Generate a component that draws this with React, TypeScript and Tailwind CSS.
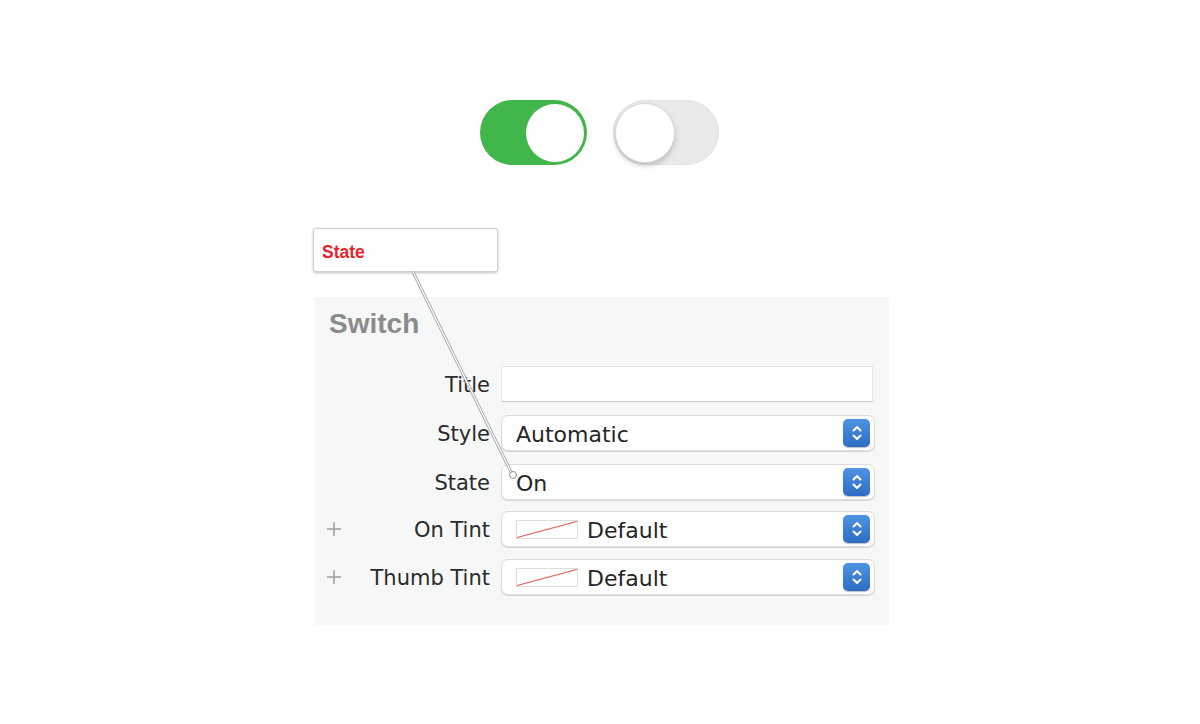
import React from "react";

const labelFont = { fontFamily: '"DejaVu Sans", "Noto Sans", sans-serif' };

function Stepper() {
    return (
        <div className="flex h-[28px] w-[27px] items-center justify-center rounded-[5px] bg-gradient-to-b from-[#4f93e2] to-[#2e6cc4] shadow-[0_1px_1px_rgba(0,0,0,0.25)]">
            <svg width="14" height="18" viewBox="0 0 14 18" fill="none" stroke="white" strokeWidth="2" strokeLinecap="round" strokeLinejoin="round">
                <path d="M3.5 6.5 L7 3 L10.5 6.5" />
                <path d="M3.5 11.5 L7 15 L10.5 11.5" />
            </svg>
        </div>
    );
}

function Swatch() {
    return (
        <div className="mr-[9px] h-[19px] w-[62px] border border-[#dedede] bg-white">
            <svg width="60" height="17" viewBox="0 0 60 17">
                <line x1="0" y1="16.5" x2="60" y2="0.5" stroke="#ee5a5a" strokeWidth="1.2" />
            </svg>
        </div>
    );
}

function Select({ value, swatch }: { value: string; swatch?: boolean }) {
    return (
        <div className="flex h-[36px] w-[374px] items-center rounded-[7px] border border-[#dddddd] bg-white pl-[14px] pr-[4px] shadow-[0_1px_1px_rgba(0,0,0,0.14)]">
            {swatch && <Swatch />}
            <span className="flex-1 pt-[3px] text-[22px] leading-none text-[#262626]" style={labelFont}>
                {value}
            </span>
            <Stepper />
        </div>
    );
}

function Row({ label, plus, top, children }: { label: string; plus?: boolean; top: string; children: React.ReactNode }) {
    return (
        <div className={`flex h-[36px] items-center ${top}`}>
            <span className="flex w-[16px] items-center justify-center">
                {plus && (
                    <svg width="16" height="16" viewBox="0 0 16 16" stroke="#9c9c9c" strokeWidth="1.5">
                        <line x1="8" y1="1" x2="8" y2="15" />
                        <line x1="1" y1="8" x2="15" y2="8" />
                    </svg>
                )}
            </span>
            <span className="flex-1 pr-[11px] pt-[3px] text-right text-[21px] leading-none text-[#2b2b2b]" style={labelFont}>
                {label}
            </span>
            {children}
        </div>
    );
}

export default function App() {
    return (
        <div className="relative h-[724px] w-[1200px] overflow-hidden bg-white pt-[100px]">
            {/* switches */}
            <div className="ml-[480px] flex gap-[26px]">
                <div className="flex h-[65px] w-[107px] items-center justify-end rounded-full bg-[#41b64a] pr-[3px]">
                    <div className="h-[58px] w-[58px] rounded-full bg-white" />
                </div>
                <div className="flex h-[65px] w-[106px] items-center rounded-full border border-[#e2e2e4] bg-[#e9e9ec] pl-[1px]">
                    <div className="h-[60px] w-[60px] rounded-full border border-[#dadada] bg-white shadow-[0_3px_5px_rgba(0,0,0,0.18)]" />
                </div>
            </div>

            {/* callout */}
            <div className="ml-[313px] mt-[63px] flex h-[44px] w-[185px] items-center rounded-[3px] border border-[#d2d2d2] bg-white pl-[8px] pt-[5px] shadow-[0_1px_3px_rgba(0,0,0,0.25)]">
                <span className="text-[17.5px] font-bold text-[#e8232b]" style={{ fontFamily: '"Liberation Sans", Arial, sans-serif' }}>
                    State
                </span>
            </div>

            {/* inspector panel */}
            <div className="ml-[314px] mt-[25px] h-[328px] w-[575px] bg-[#f6f7f7] pl-[12px] pr-[14px] pt-[10px]">
                <div className="h-[34px] pl-[3px] text-[28px] font-bold leading-[34px] text-[#8b8b8b]" style={{ fontFamily: '"Liberation Sans", Arial, sans-serif' }}>
                    Switch
                </div>
                <div className="mt-[25px] flex flex-col">
                    <Row label="Title" top="mt-0">
                        <div className="mr-[2px] h-[36px] w-[372px] border border-[#e8e8e8] border-b-[#c9c9c9] bg-white" />
                    </Row>
                    <Row label="Style" top="mt-[13px]">
                        <Select value="Automatic" />
                    </Row>
                    <Row label="State" top="mt-[13px]">
                        <Select value="On" />
                    </Row>
                    <Row label="On Tint" plus top="mt-[11px]">
                        <Select value="Default" swatch />
                    </Row>
                    <Row label="Thumb Tint" plus top="mt-[12px]">
                        <Select value="Default" swatch />
                    </Row>
                </div>
            </div>

            {/* connector from callout to the State field */}
            <svg className="pointer-events-none absolute left-0 top-0" width="1200" height="724">
                <line x1="413" y1="272" x2="511" y2="472" stroke="#a8a8a8" strokeWidth="3" />
                <line x1="413" y1="272" x2="511" y2="472" stroke="#ffffff" strokeWidth="1.2" />
                <circle cx="513" cy="475" r="3.5" fill="white" stroke="#8e8e8e" strokeWidth="1" />
            </svg>
        </div>
    );
}
